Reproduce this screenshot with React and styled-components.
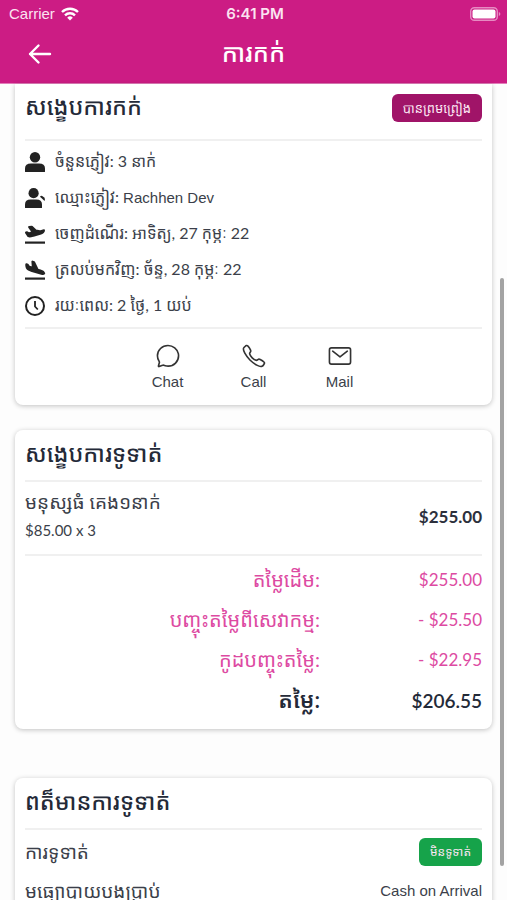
import React from "react";
import styled, { createGlobalStyle } from "styled-components";
import { IoChatbubbleOutline, IoCallOutline, IoMailOutline } from "react-icons/io5";

const GlobalStyle = createGlobalStyle`
  * { box-sizing: border-box; }
  body { margin: 0; background: #fdfdfd; color: #3b3f4a; font-family: Lato, "Noto Sans Khmer", sans-serif; }
  h1, h2, p, ul, dl, dd { margin: 0; padding: 0; }
  button { border: 0; padding: 0; background: none; color: inherit; font: inherit; cursor: pointer; }
`;

const Screen = styled.div`
  position: relative;
  height: 100vh;
  overflow: hidden;
`;

const TopArea = styled.header`
  background: #cc1c84;
  color: #fff;
  border-bottom: 1px solid #e27dba;
`;

const StatusBar = styled.div`
  display: grid;
  grid-template-columns: 1fr auto 1fr;
  align-items: center;
  height: 28px;
  padding: 0 6px 0 9px;
  font: 15px/20px "Liberation Sans", sans-serif;
  color: #fbe3f1;
`;

const Carrier = styled.span`
  display: flex;
  align-items: center;
  gap: 6px;
`;

const Time = styled.time`
  font: 600 15px/20px Inter, sans-serif;
`;

const Battery = styled.svg`
  justify-self: end;
`;

const NavBar = styled.div`
  display: grid;
  grid-template-columns: 24px 1fr 24px;
  align-items: center;
  height: 55px;
  padding: 0 28px 3px;
`;

const BackButton = styled.button`
  display: flex;
`;

const Title = styled.h1`
  padding-bottom: 4px;
  text-align: center;
  font-size: 25px;
  line-height: 32px;
  font-weight: 500;
`;

const Content = styled.main`
  display: flex;
  flex-direction: column;
  padding: 0 15px;
`;

const Card = styled.section`
  padding: ${(p) => (p.$scrolled ? "0" : "4px")} 10px 8px;
  margin-bottom: ${(p) => p.$gap || 0}px;
  background: #fff;
  border-radius: ${(p) => (p.$scrolled ? "0 0 8px 8px" : "8px")};
  box-shadow: 0 1px 5px rgba(0, 0, 0, 0.24);
`;

const CardHeader = styled.div`
  display: flex;
  align-items: center;
  justify-content: space-between;
  height: ${(p) => (p.$tall ? 55 : 46)}px;
  padding-bottom: ${(p) => (p.$tall ? 7 : 8)}px;
`;

const Heading = styled.h2`
  padding-bottom: ${(p) => (p.$raised ? 5 : 0)}px;
  font-size: 23px;
  line-height: 32px;
  font-weight: 500;
  color: #242a38;
`;

const Badge = styled.span`
  padding: 0 11px;
  border-radius: 6px;
  background: ${(p) => p.$color};
  color: #fbe6f3;
  font-size: ${(p) => p.$size}px;
  line-height: 28px;
`;

const InfoList = styled.ul`
  list-style: none;
  padding: 3px 0;
  border-top: 2px solid #f0f0f0;
  border-bottom: 2px solid #f0f0f0;
`;

const InfoRow = styled.li`
  display: flex;
  align-items: center;
  gap: 10px;
  height: 36px;
  font-size: 16px;
  line-height: 24px;
`;

const InfoText = styled.span`
  padding-bottom: 2px;
`;

const InfoIcon = styled.svg`
  flex: none;
  width: 20px;
  height: 20px;
  overflow: visible;
  fill: #222;
`;

const Latin = styled.span`
  font-family: "Liberation Sans", sans-serif;
  font-size: 15px;
`;

const Actions = styled.div`
  display: flex;
  justify-content: center;
  padding: 14px 0 5px;
`;

const Action = styled.button`
  display: flex;
  flex-direction: column;
  align-items: center;
  gap: 3px;
  width: 86px;
  font: 15px/20px "Liberation Sans", sans-serif;
  svg { color: #333; }
`;

const ItemRow = styled.div`
  display: flex;
  align-items: center;
  justify-content: space-between;
  height: 76px;
  padding-bottom: 4px;
  border-top: 2px solid #f0f0f0;
  border-bottom: 2px solid #f0f0f0;
`;

const ItemName = styled.p`
  font-size: 19px;
  line-height: 28px;
`;

const ItemDetail = styled.p`
  font-size: 15px;
  line-height: 28px;
`;

const Amount = styled.strong`
  font-size: 17px;
  font-weight: 700;
  color: #2c303c;
`;

const Totals = styled.dl`
  padding-top: 3px;
`;

const TotalRow = styled.div`
  display: grid;
  grid-template-columns: 295px 1fr;
  align-items: center;
  height: ${(p) => (p.$strong ? 42 : 40)}px;
  text-align: right;
  color: ${(p) => (p.$strong ? "#242a38" : "#dd4aa2")};
  font-weight: ${(p) => (p.$strong ? 600 : 400)};
  dt { font-size: ${(p) => (p.$strong ? 22 : 20)}px; line-height: 32px; }
  dd { padding-top: 2px; font-size: ${(p) => (p.$strong ? 19 : 17)}px; line-height: 32px; }
`;

const PaymentList = styled.div`
  padding-top: 2px;
  border-top: 2px solid #f0f0f0;
`;

const PaymentRow = styled.div`
  display: flex;
  align-items: center;
  justify-content: space-between;
  height: 39px;
  font-size: 19px;
  line-height: 28px;
`;

const ScrollThumb = styled.div`
  position: absolute;
  top: 278px;
  right: 3px;
  width: 4px;
  height: 588px;
  border-radius: 2px;
  background: #a3a3a3;
`;

const GuestsIcon = () => (
  <InfoIcon viewBox="0 0 20 20">
    <circle cx="10" cy="5.2" r="5.2" />
    <path d="M0 19.500v-3Q0 11.500 6 11.500h8q6 0 6 5v3q0 .5-.5.5H.5q-.5 0-.5-.5z" />
  </InfoIcon>
);

const GuestNameIcon = () => (
  <InfoIcon viewBox="0 0 20 20">
    <circle cx="8.6" cy="5.2" r="5.1" />
    <path d="M0 19.500v-3Q0 11.500 5.500 11.500h5.800q5.700 0 5.700 5v3q0 .5-.5.5H.5q-.5 0-.5-.5z" />
    <path d="M15 8.800q.8-1.600 2.200-.8l2 1.600q1.300 1.200.4 3.300z" />
  </InfoIcon>
);

const DepartureIcon = () => (
  <InfoIcon viewBox="2 1.5 20 20">
    <path stroke="#222" strokeWidth="2.2" strokeLinejoin="round" d="M20.900 7.900c-1.300 0-2.900.9-4.100 1L13 8.200 8.800 4.300l-2.600.2 3.600 5-3.700 1.600-2-1.300-1 .3 2.300 3.500c1.500.6 3.200 0 4.900-.5l6.800-1.900c2.300-.7 3.700-1.600 3.800-3.300z" />
    <path d="M2 19h20v2.200H2z" />
  </InfoIcon>
);

const ArrivalIcon = () => (
  <InfoIcon viewBox="2 1.5 20 20">
    <path stroke="#222" strokeWidth="2.2" strokeLinejoin="round" d="m9 12.500 9.500 2.700c1.100.3 2.100.3 2.600-.4-.4-1.300-1.700-2-3-2.400l-3.500-1.200-3.600-7.400-1.500-.6.500 6.100-3.900-.9-1.400-2.100-1.300-.4c-.3 2.700.5 4.300 2.700 5.400z" />
    <path d="M2 19h20v2.200H2z" />
  </InfoIcon>
);

const DurationIcon = () => (
  <InfoIcon viewBox="0 0 20 20">
    <circle cx="10" cy="10" r="9" fill="none" stroke="#222" strokeWidth="2" />
    <path d="M10 5v5.500l2.800 3" fill="none" stroke="#222" strokeWidth="1.8" />
  </InfoIcon>
);

const trip = [
  { Icon: GuestsIcon, text: "ចំនួនភ្ញៀវ: 3 នាក់" },
  { Icon: GuestNameIcon, text: "ឈ្មោះភ្ញៀវ: ", name: "Rachhen Dev" },
  { Icon: DepartureIcon, text: "ចេញដំណើរ: អាទិត្យ, 27 កុម្ភៈ 22" },
  { Icon: ArrivalIcon, text: "ត្រលប់មកវិញ: ច័ន្ទ, 28 កុម្ភៈ 22" },
  { Icon: DurationIcon, text: "រយៈពេល: 2 ថ្ងៃ, 1 យប់" },
];

const totals = [
  { label: "តម្លៃដើម:", value: "$255.00" },
  { label: "បញ្ចុះតម្លៃពីសេវាកម្ម:", value: "- $25.50" },
  { label: "កូដបញ្ចុះតម្លៃ:", value: "- $22.95" },
  { label: "តម្លៃ:", value: "$206.55", strong: true },
];

export default function App() {
  return (
    <Screen lang="km">
      <GlobalStyle />
      <TopArea>
        <StatusBar>
          <Carrier>
            Carrier
            <svg width="18" height="14" viewBox="0 0 18 14" fill="none" stroke="#fff" strokeWidth="2.4">
              <path d="M1 5a11.5 11.5 0 0 1 16 0M4 8.3a7.2 7.2 0 0 1 10 0" />
              <path d="M9 13.5 6.2 10.7a4 4 0 0 1 5.6 0z" fill="#fff" stroke="none" />
            </svg>
          </Carrier>
          <Time>6:41 PM</Time>
          <Battery width="31" height="14" viewBox="0 0 31 14">
            <rect x=".7" y=".7" width="26.6" height="12.6" rx="3.6" fill="none" stroke="#e68bc2" strokeWidth="1.4" />
            <rect x="2.5" y="2.5" width="23" height="9" rx="2" fill="#fff" />
            <path d="M28.8 5v4q1.6-.6 1.6-2t-1.6-2z" fill="#e68bc2" />
          </Battery>
        </StatusBar>
        <NavBar>
          <BackButton aria-label="Back">
            <svg width="24" height="24" viewBox="0 0 24 24" fill="none" stroke="#fff" strokeWidth="2.4" strokeLinecap="round" strokeLinejoin="round">
              <path d="M22 12H2M10.500 3.500 2 12l8.500 8.500" />
            </svg>
          </BackButton>
          <Title>ការកក់</Title>
        </NavBar>
      </TopArea>
      <Content>
        <Card $scrolled $gap={25}>
          <CardHeader $tall>
            <Heading $raised>សង្ខេបការកក់</Heading>
            <Badge $color="#a01468" $size={13}>បានព្រមព្រៀង</Badge>
          </CardHeader>
          <InfoList>
            {trip.map(({ Icon, text, name }) => (
              <InfoRow key={text}>
                <Icon />
                <InfoText>{text}{name && <Latin>{name}</Latin>}</InfoText>
              </InfoRow>
            ))}
          </InfoList>
          <Actions>
            <Action><IoChatbubbleOutline size={26} />Chat</Action>
            <Action><IoCallOutline size={26} />Call</Action>
            <Action><IoMailOutline size={26} />Mail</Action>
          </Actions>
        </Card>
        <Card $gap={49}>
          <CardHeader>
            <Heading>សង្ខេបការទូទាត់</Heading>
          </CardHeader>
          <ItemRow>
            <div>
              <ItemName>មនុស្សធំ គេង១នាក់</ItemName>
              <ItemDetail>$85.00 x 3</ItemDetail>
            </div>
            <Amount>$255.00</Amount>
          </ItemRow>
          <Totals>
            {totals.map(({ label, value, strong }) => (
              <TotalRow key={label} $strong={strong}>
                <dt>{label}</dt>
                <dd>{value}</dd>
              </TotalRow>
            ))}
          </Totals>
        </Card>
        <Card>
          <CardHeader>
            <Heading>ពត៏មានការទូទាត់</Heading>
          </CardHeader>
          <PaymentList>
            <PaymentRow>
              <span>ការទូទាត់</span>
              <Badge $color="#16a34a" $size={12}>មិនទូទាត់</Badge>
            </PaymentRow>
            <PaymentRow>
              <span>មធ្យោបាយបងប្រាប់</span>
              <Latin>Cash on Arrival</Latin>
            </PaymentRow>
          </PaymentList>
        </Card>
      </Content>
      <ScrollThumb />
    </Screen>
  );
}
